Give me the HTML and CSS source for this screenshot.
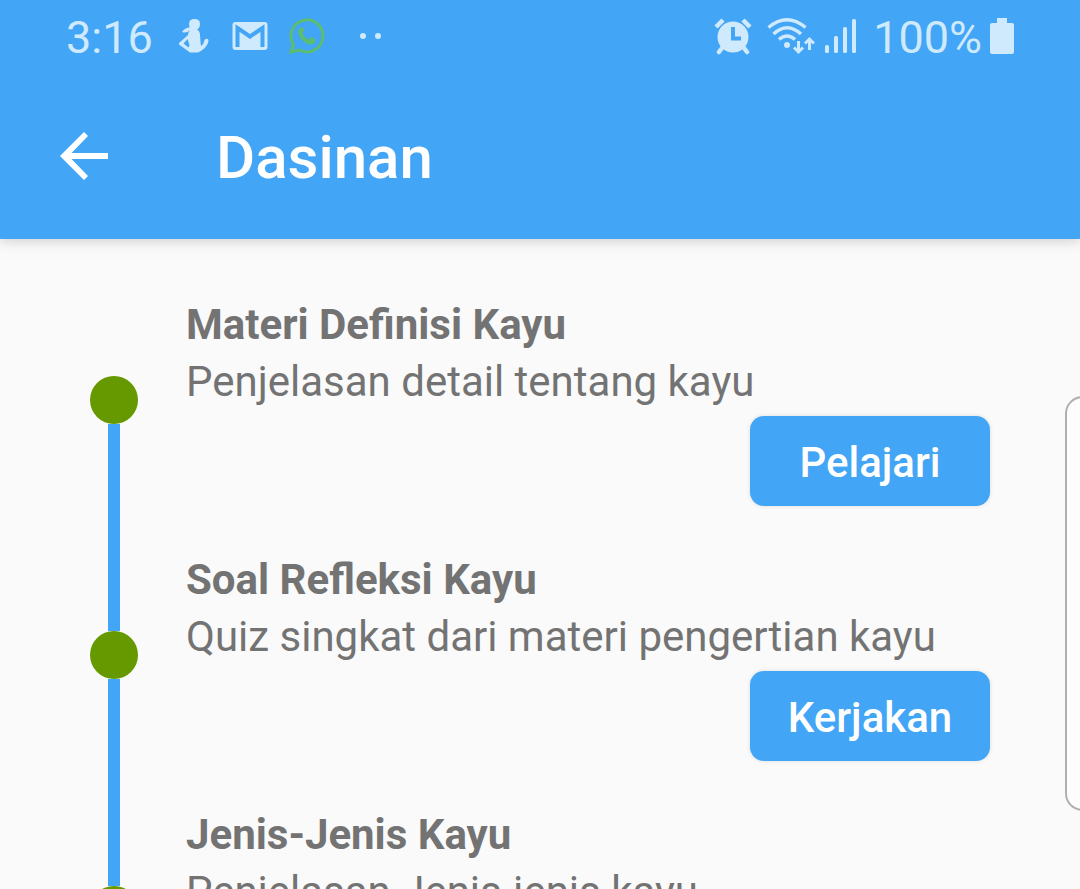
FILE: index.html
```html
<!DOCTYPE html>
<html lang="id">
<head>
<meta charset="utf-8">
<meta name="viewport" content="width=device-width, initial-scale=1">
<title>Dasinan</title>
<link rel="stylesheet" href="styles.css">
</head>
<body>
<div class="screen">
  <header class="header">
    <div class="status">
      <div class="status-left">
        <span class="status-text">3:16</span>
        <svg class="icon-person" width="32" height="36" viewBox="0 0 32 36" aria-hidden="true">
          <path d="M11 6 Q11 1 16.500 1 Q22 1 22 6 Q22 10 19 11.500 Q22 13 22 17 L22.500 24 L23 28 Q26 26 26.500 22 Q28 20 30 21 Q31 22 30 25 Q28 30 22 33.500 L20 34.500 H12 L1 26.500 L1 25 L10 17 Q10 14 12 12.500 Q8 15.500 4 14 Q7 9.500 11.500 9.500Z M9.500 21 L5.500 25.500 L10.500 29.500 L11.500 27Z" fill-rule="evenodd"/>
        </svg>
        <svg class="icon-mail" width="36" height="30" viewBox="0 0 36 30" aria-hidden="true">
          <rect x="0.500" y="1" width="35" height="28" rx="3"/>
          <path class="cut" d="M5.500 26 V7 L18 15.500 L30.500 7 V26"/>
        </svg>
        <svg class="icon-chat" width="38" height="38" viewBox="0 0 38 38" aria-hidden="true">
          <path class="outline" d="M3 35 L5.500 27.500 A16 16 0 1 1 11.500 33Z"/>
          <path d="M12.500 10.500 Q10 12 10 15 Q11 23 20 27 Q26 29 27.500 24 L27 22 L23 20 L21 22.500 Q16 20.500 14.500 16 L16.500 14 L15 10.500Z"/>
        </svg>
        <svg class="icon-dots" width="24" height="8" viewBox="0 0 24 8" aria-hidden="true">
          <circle cx="4" cy="4" r="3"/><circle cx="19" cy="4" r="3"/>
        </svg>
      </div>
      <div class="status-right">
        <svg width="38" height="38" viewBox="0 0 38 38" aria-hidden="true">
          <circle cx="19" cy="20" r="15.500"/>
          <path class="stroke" d="M2 10 L9 3 M29 3 L36 10" stroke-width="4.500"/>
          <path class="stroke" d="M8 31 L5 35 M30 31 L33 35" stroke-width="4.500" stroke-linecap="round"/>
          <path class="hole" d="M19 10 V21.500 H27"/>
        </svg>
        <svg class="icon-wifi" width="48" height="38" viewBox="0 0 48 38" aria-hidden="true">
          <g class="stroke" stroke-width="3.500">
            <path d="M1.500 10.500 Q20 -5 38.500 10.500"/>
            <path d="M6.500 17 Q20 4.500 34 17"/>
            <path d="M12 22.500 Q20 15.500 28 22.500"/>
            <path d="M31.500 24 V35 M27 30.500 L31.500 35 L36 30.500 M42.500 33 V22 M38 26.500 L42.500 22 L47 26.500" stroke-width="3"/>
          </g>
          <circle cx="20" cy="28" r="3"/>
        </svg>
        <svg class="icon-signal" width="32" height="36" viewBox="0 0 32 36" aria-hidden="true">
          <rect x="0" y="27" width="4" height="8" rx="1.500"/><rect x="9" y="18" width="4" height="17" rx="1.500"/><rect x="18" y="9" width="4" height="26" rx="1.500"/><rect x="27" y="1" width="4" height="34" rx="1.500"/>
        </svg>
        <span class="status-text">100%</span>
        <svg class="icon-battery" width="24" height="38" viewBox="0 0 24 38" aria-hidden="true">
          <path d="M7 1 H17 V6 H22 Q24 6 24 8 V35 Q24 37 22 37 H2 Q0 37 0 35 V8 Q0 6 2 6 H7Z"/>
        </svg>
      </div>
    </div>
    <div class="appbar">
      <button class="back" type="button" aria-label="Kembali">
        <svg width="48" height="48" viewBox="0 0 48 48" aria-hidden="true">
          <path d="M48 21 H11.500 L28 4 L24 0 L0 24 L24 48 L28 44 L11.500 27 H48Z"/>
        </svg>
      </button>
      <h1 class="title">Dasinan</h1>
    </div>
  </header>
  <main>
    <ol class="timeline">
      <li class="step">
        <div class="rail"><span class="dot"></span></div>
        <div class="content">
          <h2 class="name">Materi Definisi Kayu</h2>
          <p class="desc">Penjelasan detail tentang kayu</p>
          <button class="action" type="button">Pelajari</button>
        </div>
      </li>
      <li class="step">
        <div class="rail"><span class="dot"></span></div>
        <div class="content">
          <h2 class="name">Soal Refleksi Kayu</h2>
          <p class="desc">Quiz singkat dari materi pengertian kayu</p>
          <button class="action" type="button">Kerjakan</button>
        </div>
      </li>
      <li class="step">
        <div class="rail"><span class="dot"></span></div>
        <div class="content">
          <h2 class="name">Jenis-Jenis Kayu</h2>
          <p class="desc">Penjelasan Jenis-jenis kayu</p>
        </div>
      </li>
    </ol>
  </main>
  <div class="edge-panel"></div>
</div>
</body>
</html>
```
FILE: styles.css
```css
* { box-sizing: border-box; }
body { margin: 0; font-family: Roboto, "Liberation Sans", sans-serif; }
h1, h2, p, ol { margin: 0; padding: 0; }

.screen {
  position: relative;
  height: 100vh;
  overflow: hidden;
  background: #fafafa;
}

.header {
  position: relative;
  background: #42a5f5;
  box-shadow: 0 2px 12px rgba(0, 0, 0, 0.18);
}

.status {
  display: flex;
  justify-content: space-between;
  height: 72px;
  padding: 0 66px;
  color: #cfe9fd;
}
.status svg { display: block; fill: #cfe9fd; }
.status-left, .status-right { display: flex; align-items: center; }
.status-text { font-size: 45px; line-height: 72px; padding-top: 4px; }
.status .stroke { fill: none; stroke: #cfe9fd; }
.status .hole { fill: none; stroke: #42a5f5; stroke-width: 4; }
.icon-person { margin-left: 25px; }
.icon-mail { margin-left: 22px; }
.icon-mail .cut { fill: none; stroke: #42a5f5; stroke-width: 4; }
.status .icon-chat { margin-left: 20px; fill: #5bbd72; }
.icon-chat .outline { fill: none; stroke: #5bbd72; stroke-width: 3; }
.icon-dots { margin-left: 33px; }
.icon-wifi { margin-left: 15px; }
.icon-signal { margin: 0 16px 0 10px; }
.icon-battery { margin-left: 8px; }

.appbar {
  display: flex;
  align-items: center;
  gap: 108px;
  height: 167px;
  padding: 0 60px;
}
.back {
  display: block;
  padding: 0;
  border: 0;
  background: none;
  cursor: pointer;
}
.back svg { display: block; fill: #fff; }
.title { padding-top: 4px; color: #fff; font-size: 60px; font-weight: 500; line-height: 72px; }

.timeline { list-style: none; padding-top: 33px; }
.step { display: flex; gap: 48px; min-height: 255px; padding: 0 90px; }
.rail { display: flex; flex-direction: column; align-items: center; width: 48px; }
.rail::before, .rail::after { content: ""; flex: 1; width: 12px; background: #42a5f5; }
.step:first-child .rail::before { background: none; }
.dot { width: 48px; height: 48px; border-radius: 50%; background: #669900; }
.content {
  display: flex;
  flex: 1;
  flex-direction: column;
  min-width: 0;
  padding: 24px 0 21px;
  color: #737373;
}
.name { font-size: 42px; font-weight: 700; line-height: 57px; }
.desc { font-size: 42px; line-height: 57px; white-space: nowrap; }
.action {
  align-self: flex-end;
  min-width: 240px;
  height: 90px;
  margin-top: 6px;
  padding: 4px 24px 0;
  border: 0;
  border-radius: 14px;
  background: #42a5f5;
  box-shadow: 0 0 4px rgba(0, 0, 0, 0.12);
  color: #fff;
  font: 500 42px/48px Roboto, "Liberation Sans", sans-serif;
  cursor: pointer;
}

.edge-panel {
  position: absolute;
  top: 396px;
  right: -20px;
  width: 35px;
  height: 415px;
  border: 2px solid #b0b0b0;
  border-radius: 18px;
  background: #fdfdfd;
}
```
